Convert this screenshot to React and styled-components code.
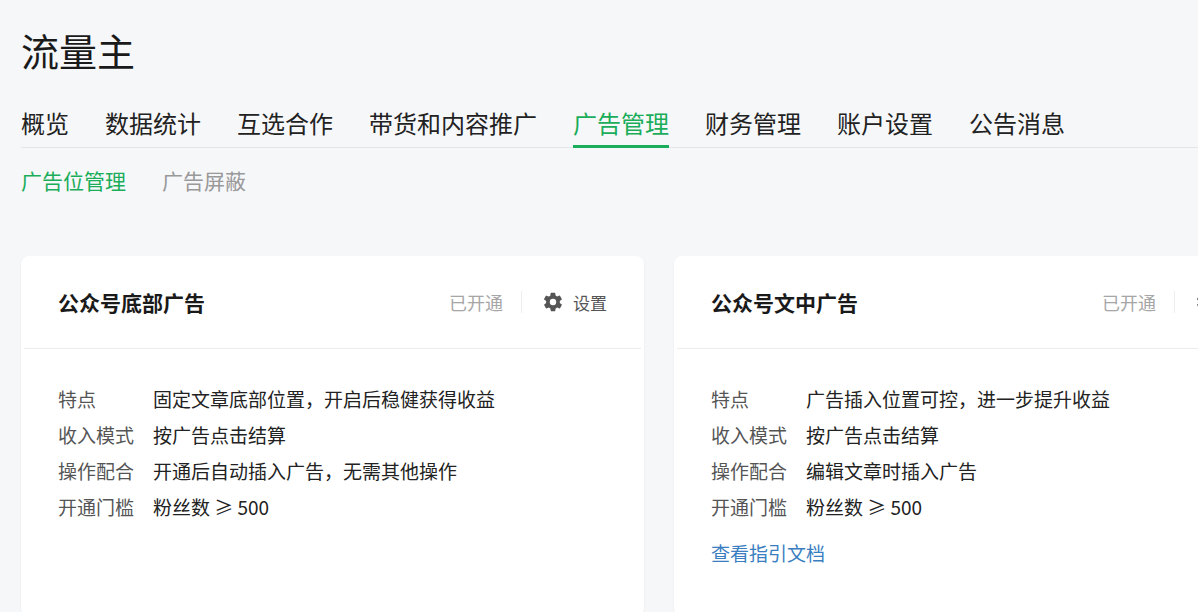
import React from 'react';
import styled, { createGlobalStyle } from 'styled-components';

const Global = createGlobalStyle`
  body { margin: 0; background: #f6f7f9; font-family: "Noto Sans CJK SC", "Noto Sans", sans-serif; overflow: hidden; }
`;

const Page = styled.div`
  padding: 22px 0 0 21px;
  width: 1177px;
`;

const Title = styled.h1`
  margin: 0;
  font-size: 38px;
  font-weight: 400;
  color: #1a1a1a;
  line-height: 56px;
`;

const Tabs = styled.div`
  display: flex;
  gap: 36px;
  margin-top: 28px;
  border-bottom: 1px solid #e3e5e8;
`;

const Tab = styled.div`
  font-size: 24px;
  line-height: 34px;
  padding-bottom: 5px;
  color: ${p => (p.$active ? '#1aad5a' : '#222')};
  border-bottom: 3px solid ${p => (p.$active ? '#1aad5a' : 'transparent')};
  margin-bottom: -1px;
`;

const SubTabs = styled.div`
  display: flex;
  gap: 36px;
  margin-top: 18px;
`;

const SubTab = styled.div`
  font-size: 21px;
  line-height: 28px;
  color: ${p => (p.$active ? '#1aad5a' : '#999')};
`;

const Cards = styled.div`
  display: flex;
  gap: 30px;
  margin-top: 62px;
`;

const Card = styled.div`
  width: 623px;
  flex-shrink: 0;
  height: 360px;
  background: #fff;
  border-radius: 8px;
  box-shadow: 0 1px 3px rgba(0,0,0,0.05);
`;

const CardHead = styled.div`
  display: flex;
  align-items: center;
  height: 92px;
  margin: 0 3px;
  padding: 0 34px;
  border-bottom: 1px solid #ececec;
`;

const CardTitle = styled.div`
  font-size: 21px;
  font-weight: 700;
  color: #1a1a1a;
  flex: 1;
`;

const Status = styled.div`
  font-size: 18px;
  color: #a6a6a6;
`;

const Divider = styled.div`
  width: 1px;
  height: 22px;
  background: #eee;
  margin: 0 20px 0 18px;
`;

const Setting = styled.div`
  display: flex;
  align-items: center;
  gap: 9px;
  font-size: 17px;
  color: #555;
`;

const Body = styled.div`
  padding: 32px 37px 0;
`;

const Row = styled.div`
  display: flex;
  font-size: 19px;
  line-height: 36px;
  color: #222;
`;

const Label = styled.span`
  width: 95px;
  color: #555;
`;

const Link = styled.div`
  font-size: 19px;
  color: #3a7ec1;
  margin-top: 14px;
`;

const Gear = () => (
  <svg width="22" height="22" viewBox="0 0 24 24" fill="#555">
    <path d="M19.4 13c.04-.33.06-.66.06-1s-.02-.67-.06-1l2.1-1.65a.5.5 0 0 0 .12-.64l-2-3.460a.5.5 0 0 0-.6-.22l-2.5 1a7.3 7.3 0 0 0-1.7-1l-.38-2.65A.5.5 0 0 0 13.9 2h-4a.5.5 0 0 0-.5.42l-.37 2.65c-.61.25-1.170.59-1.7 1l-2.5-1a.5.5 0 0 0-.6.22l-2 3.46a.5.5 0 0 0 .12.64L4.56 11c-.04.33-.07.67-.07 1s.03.67.07 1l-2.1 1.65a.5.5 0 0 0-.13.64l2 3.46c.13.22.39.3.6.22l2.5-1c.53.4 1.09.74 1.7 1l.38 2.65c.04.24.25.42.5.42h4c.25 0 .46-.18.5-.42l.37-2.650c.61-.26 1.17-.6 1.7-1l2.5 1c.22.08.48 0 .6-.22l2-3.46a.5.5 0 0 0-.12-.64L19.4 13zM12 15.5a3.5 3.5 0 1 1 0-7 3.5 3.5 0 0 1 0 7z" />
  </svg>
);

const cards = [
  { title: '公众号底部广告', rows: [['特点', '固定文章底部位置，开启后稳健获得收益'], ['收入模式', '按广告点击结算'], ['操作配合', '开通后自动插入广告，无需其他操作'], ['开通门槛', '粉丝数 ≥ 500']] },
  { title: '公众号文中广告', rows: [['特点', '广告插入位置可控，进一步提升收益'], ['收入模式', '按广告点击结算'], ['操作配合', '编辑文章时插入广告'], ['开通门槛', '粉丝数 ≥ 500']], link: '查看指引文档' },
];

export default function App() {
  const tabs = ['概览', '数据统计', '互选合作', '带货和内容推广', '广告管理', '财务管理', '账户设置', '公告消息'];
  return (
    <Page>
      <Global />
      <Title>流量主</Title>
      <Tabs>
        {tabs.map(t => <Tab key={t} $active={t === '广告管理'}>{t}</Tab>)}
      </Tabs>
      <SubTabs>
        <SubTab $active>广告位管理</SubTab>
        <SubTab>广告屏蔽</SubTab>
      </SubTabs>
      <Cards>
        {cards.map(c => (
          <Card key={c.title}>
            <CardHead>
              <CardTitle>{c.title}</CardTitle>
              <Status>已开通</Status>
              <Divider />
              <Setting><Gear />设置</Setting>
            </CardHead>
            <Body>
              {c.rows.map(([l, v]) => (
                <Row key={l}><Label>{l}</Label>{v}</Row>
              ))}
              {c.link && <Link>{c.link}</Link>}
            </Body>
          </Card>
        ))}
      </Cards>
    </Page>
  );
}
